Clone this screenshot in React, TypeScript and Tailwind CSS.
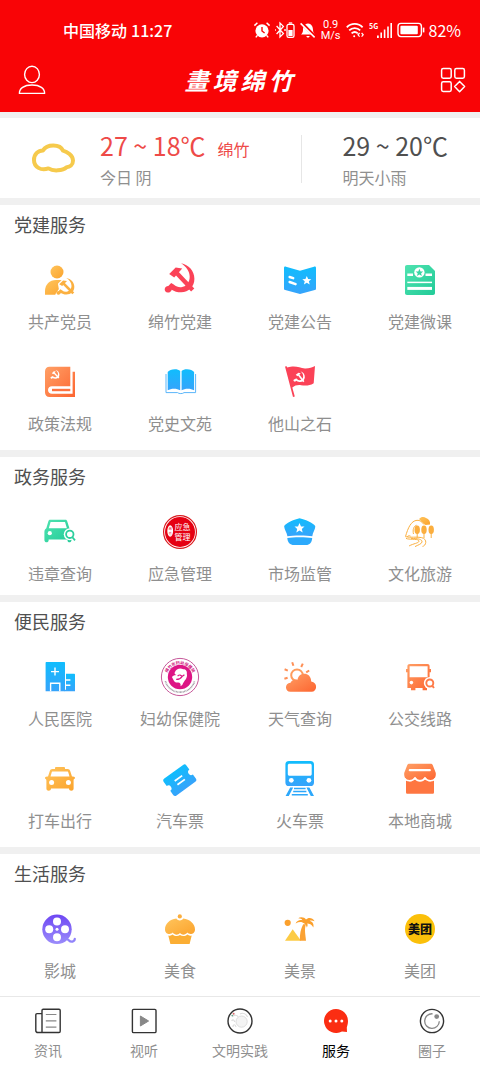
import React from 'react';
import { clsx } from 'clsx';

interface Service {
  title: string;
  icon: React.ReactNode;
}

interface ServiceGroup {
  title: string;
  items: Service[];
}

interface TabItem {
  title: string;
  icon: React.ReactNode;
  active?: boolean;
}

const STAR = 'M0-5 1.5-1.6 5-1.4 2.3.9 3.2 4.4 0 2.5-3.2 4.4-2.3.9-5-1.4-1.5-1.6Z';

const Gradients: React.FC = () => (
  <svg width="0" height="0" className="absolute" aria-hidden="true">
    <defs>
      <linearGradient id="amber" x1="0" y1="0" x2="1" y2="1">
        <stop offset="0" stopColor="#ffc45c" />
        <stop offset="1" stopColor="#fba32c" />
      </linearGradient>
      <linearGradient id="blue" x1="0" y1="0" x2="0" y2="1">
        <stop offset="0" stopColor="#10bdfd" />
        <stop offset="1" stopColor="#36a3fb" />
      </linearGradient>
      <linearGradient id="green" x1="0" y1="0" x2="1" y2="1">
        <stop offset="0" stopColor="#4fe3b0" />
        <stop offset="1" stopColor="#22cb98" />
      </linearGradient>
      <linearGradient id="orange" x1="0" y1="0" x2="1" y2="1">
        <stop offset="0" stopColor="#ffa066" />
        <stop offset="1" stopColor="#fd6530" />
      </linearGradient>
      <linearGradient id="violet" x1="0" y1="0" x2="0" y2="1">
        <stop offset="0" stopColor="#6e47f3" />
        <stop offset="1" stopColor="#9b8cfb" />
      </linearGradient>
    </defs>
  </svg>
);

const Icon: React.FC<{ children: React.ReactNode }> = ({ children }) => (
  <svg viewBox="0 0 40 40" className="h-10 w-10" fill="none" aria-hidden="true">
    {children}
  </svg>
);

// Hammer and sickle in a 30x30 box
const Emblem: React.FC<{ transform: string; color: string; outline?: boolean }> = ({
  transform,
  color,
  outline
}) => (
  <g transform={transform}>
    {outline && (
      <path
        d="M16.3 0C24 1.5 29.7 7.5 29.7 15.5 29.7 23.5 24 29 16.5 29H0L6 20 4.5 10.8 11 4.2 17.5 5.2 24 12Z"
        fill="#fff"
        stroke="#fff"
        strokeWidth="4"
        strokeLinejoin="round"
      />
    )}
    <path
      d="M16.3 0C24 1.5 29.7 7.5 29.7 15.5 29.7 23.5 24 29 16.5 29 12.5 29 9.5 28 7 26.4 6.5 28.2 4.8 29.5 3 29.3 1 29 0 27.6 0 26.2 0 24.3 1.5 22.8 3.6 22.8L6.5 19.6 9 21.3C11.5 23.4 14 24.3 16.5 24 21.5 23.4 25 19 25 13.5 25 8 21.5 3.5 16.3 0Z"
      fill={color}
    />
    <path d="M4.5 10.8 11 4.2 17.5 5.2 9.5 14.2Z" fill={color} />
    <path d="M11.5 9.3 28 26.8" stroke={color} strokeWidth="4.4" />
  </g>
);

const groups: ServiceGroup[] = [
  {
    title: '党建服务',
    items: [
      {
        title: '共产党员',
        icon: (
          <Icon>
            <circle cx="17" cy="12" r="6.5" fill="url(#amber)" />
            <path d="M5 34.7V31C5 24.6 9.6 20 16 20h4c3 0 5 1 7 3v11.7Z" fill="url(#amber)" />
            <Emblem transform="translate(16.5 18) scale(.6 .57)" color="#fbb040" outline />
          </Icon>
        )
      },
      {
        title: '绵竹党建',
        icon: (
          <Icon>
            <Emblem transform="translate(4.7 3.3)" color="#fb4257" />
          </Icon>
        )
      },
      {
        title: '党建公告',
        icon: (
          <Icon>
            <path
              d="M4 8C4 6.8 5 6.3 6 6.7L20 10.8 34 6.7C35 6.3 36 6.8 36 8V28.4C36 29.3 35.6 29.8 34.8 30.1L20 34 5.2 30.1C4.4 29.8 4 29.3 4 28.4Z"
              fill="url(#blue)"
            />
            <path d="M9.6 17 13.2 18.2M9.6 22 15.6 24.2" stroke="#fff" strokeWidth="2.4" strokeLinecap="round" />
            <path d={STAR} transform="translate(26.8 20.5) scale(.9)" fill="#fff" />
          </Icon>
        )
      },
      {
        title: '党建微课',
        icon: (
          <Icon>
            <path d="M7 5H29L35 11V33C35 34.2 34.2 35 33 35H7C5.8 35 5 34.2 5 33V7C5 5.8 5.8 5 7 5Z" fill="url(#green)" />
            <path d="M7.3 14.7H13M25.5 14.7H32" stroke="#fff" strokeWidth="2.6" />
            <path d="M7.3 22.4H32" stroke="#fff" strokeWidth="1.5" />
            <path d="M7.3 28.4H32" stroke="#fff" strokeWidth="3" />
            <circle cx="19.4" cy="12.4" r="5.2" fill="#fff" />
            <path d={STAR} transform="translate(19.4 12.6) scale(.75)" fill="#36d6a3" />
          </Icon>
        )
      },
      {
        title: '政策法规',
        icon: (
          <Icon>
            <path
              d="M9.5 4.7H30.3V24.3H12C9.6 24.3 8 25.8 8 28S9.6 31.8 12 31.8H32.6V9.7H35V35H9.5C6.8 35 5 33.2 5 30.5V9.2C5 6.5 6.8 4.7 9.5 4.7Z"
              fill="url(#orange)"
            />
            <path d="M12 28H30.3" stroke="#fd7340" strokeWidth="2.4" />
            <Emblem transform="translate(10.5 8) scale(.3)" color="#fff" />
          </Icon>
        )
      },
      {
        title: '党史文苑',
        icon: (
          <Icon>
            <path
              d="M7.7 10C9.5 7 17.5 6 20.2 9V28.3C17 26.2 11 26.2 7.7 28.3ZM21.6 9C24.3 6 32.3 7 34.1 10V28.3C30.8 26.2 24.8 26.2 21.6 28.3Z"
              fill="url(#blue)"
            />
            <path d="M6 12V30.6H17.6C18.6 31.9 23 31.9 24 30.6H35.6V12" stroke="#5bb6fa" />
          </Icon>
        )
      },
      {
        title: '他山之石',
        icon: (
          <Icon>
            <path
              d="M5 4.6 6.6 4.2 7.3 5.6C16 3 19 6.2 25 6.4 29 6.5 32 5.6 35 4L33.7 21.2C29 24.2 25 23.6 21 23.2 17.5 22.8 14.6 23.6 12.3 25.6L14.8 34.4 13 35Z"
              fill="#fb4257"
            />
            <Emblem transform="translate(14.5 8.7) rotate(6) scale(.37)" color="#fff" />
          </Icon>
        )
      }
    ]
  },
  {
    title: '政务服务',
    items: [
      {
        title: '违章查询',
        icon: (
          <Icon>
            <path
              fillRule="evenodd"
              d="M8.3 9.5C8.6 8.3 9.2 7.8 10.2 7.8H25.4C26.4 7.8 27 8.3 27.3 9.5L29.4 16.3C30.7 17 31.5 18.4 31.5 20V28C31.5 31 27.5 31 27.5 28.5V27.6H8.6V28.5C8.6 31 4.4 31 4.4 28V20C4.4 18.4 5 17 6.3 16.3ZM10.6 10 8.8 16.2H26.9L25 10Z"
              fill="url(#green)"
            />
            <circle cx="9.8" cy="21.2" r="2.1" fill="#fff" />
            <circle cx="29.8" cy="22.3" r="6" fill="#fff" />
            <circle cx="29.8" cy="22.3" r="3.7" stroke="#2ccf9d" strokeWidth="1.8" />
            <path d="M32.4 25.2 35 28.4" stroke="#2ccf9d" strokeWidth="1.8" />
          </Icon>
        )
      },
      {
        title: '应急管理',
        icon: (
          <Icon>
            <circle cx="20" cy="20" r="16.4" fill="#fff" stroke="#d91a1e" strokeWidth="1.2" />
            <circle cx="20" cy="20" r="15" fill="#e50012" />
            <ellipse cx="10.2" cy="19" rx="2.9" ry="5.8" fill="#fff" />
            <g textAnchor="middle">
              <text x="10.2" y="18" fontSize="3" fill="#e50012">绵</text>
              <text x="10.2" y="22.6" fontSize="3" fill="#e50012">竹</text>
              <text x="22.6" y="17.6" fontSize="8" fill="#fff">应急</text>
              <text x="22.6" y="28.4" fontSize="8" fill="#fff">管理</text>
            </g>
          </Icon>
        )
      },
      {
        title: '市场监管',
        icon: (
          <Icon>
            <path
              d="M4.2 14.8C3.6 13.2 10 8.5 19.6 6.3 29.2 8.5 35.8 13.2 35.3 14.8 35 18.2 32.8 20.3 32.3 24.3 26 23.3 13.5 23.3 7.4 24.3 6.8 20.3 4.5 18.2 4.2 14.8Z"
              fill="url(#blue)"
            />
            <path d="M7.3 25.9C13 25 26 25 32.2 25.9 32 30.4 29.5 33 26 33H14C10 33 7.6 30.4 7.3 25.9Z" fill="#2caafc" />
            <path d={STAR} transform="translate(19.5 16)" fill="#fff" />
          </Icon>
        )
      },
      {
        title: '文化旅游',
        icon: (
          <Icon>
            <path d="M19 7C21 4.5 24 4.4 26 6 29 7 30.5 9.5 30 12.5L25.5 13 22 10Z" fill="url(#amber)" />
            <g stroke="#fbb040">
              <path d="M5.5 24.5C8 16 11 8.8 17 8.3 20 8 22 10 24 12.5M7 25C8 23.5 9.5 23.5 10.6 24.2M13.5 22C12.5 18 13.6 14 16.6 13.2" />
              <path d="M5.5 24.7C11 26 16 24.4 21.5 25.6 28 27 26 34 22.5 34.4M6 26.4C9 27.8 17 26.6 18.6 28.4 20.5 31 14 31.2 9 34M11 26.6C18 26.2 22.5 27.4 22 30 21.6 32 18 33 15 34.6" />
              <path d="M17.2 15V26M24 15V26M31.2 15V26" />
            </g>
            <g fill="#fbae3e">
              <ellipse cx="17.2" cy="17.8" rx="2.7" ry="4.3" />
              <ellipse cx="24" cy="17.8" rx="2.7" ry="4.3" />
              <ellipse cx="31.2" cy="17.8" rx="2.7" ry="4.3" />
            </g>
          </Icon>
        )
      }
    ]
  },
  {
    title: '便民服务',
    items: [
      {
        title: '人民医院',
        icon: (
          <Icon>
            <path d="M6.6 5H24C24.6 5 25 5.4 25 6V34.3H5.6V6C5.6 5.4 6 5 6.6 5Z" fill="url(#blue)" />
            <path d="M26 16.8H34C34.6 16.8 35 17.2 35 17.8V34.3H24.5V32.8H26Z" fill="url(#blue)" />
            <path d="M15 10.6V18.6M11 14.6H19M10.6 34.3V26.3H19.8V34.3M25 23H30.4M25 28.3H30.4" stroke="#fff" strokeWidth="1.4" />
          </Icon>
        )
      },
      {
        title: '妇幼保健院',
        icon: (
          <Icon>
            <circle cx="20" cy="20" r="18.6" stroke="#c0468f" strokeWidth=".9" />
            <circle cx="20" cy="20" r="12.2" fill="#dd1585" />
            <path id="seal-arc" d="M6.6 20.6A13.4 13.4 0 0 1 33.4 20.6" />
            <text fontSize="4" fill="#d0107c" className="font-bold">
              <textPath href="#seal-arc" startOffset="50%" textAnchor="middle">绵竹市妇幼保健院</textPath>
            </text>
            <path d="M5.4 24.2A15.2 15.2 0 0 0 34.6 24.2" stroke="#98929a" strokeWidth="1.6" strokeDasharray=".8 .6" />
            <path
              d="M14.7 15.5C16 12 20 10.6 23.2 12.2 25.5 12 27.4 14 26.8 16.8 28 21.5 24 23.5 22.4 27.8L20.6 29.2C21 26.2 19.6 25 17 25.6 14 25.4 13.4 22.4 12 20.2 13 18 15 19 16.4 17.8 14.8 17.5 14.4 16.6 14.7 15.5Z"
              fill="#fff"
            />
            <path d="M17.6 19.2C19.3 17.2 21.5 18 22 19.6 20.6 22 18.4 22.4 16.2 22.4M22 19.6 24.4 17.8" stroke="#dd1585" strokeWidth="1.2" />
          </Icon>
        )
      },
      {
        title: '天气查询',
        icon: (
          <Icon>
            <circle cx="17" cy="18.2" r="5.8" stroke="#ff9c5c" strokeWidth="2" />
            <path
              d="M4.6 12.3 7.8 13.6M12.2 5.3 13.4 8.8M22.8 6.6 21.2 10M29.2 13.5 26.2 15.3M4.4 21.8 7.6 20.8"
              stroke="#fe8f55"
              strokeWidth="2"
            />
            <path
              d="M10.5 34.7C4.6 34.7 4.4 26 10.5 25.7 12 22.6 15.6 21.8 17.6 22.8 18.6 14.6 31 14.6 31.2 24.4 38 25.2 37.4 34.7 31.5 34.7Z"
              fill="url(#orange)"
            />
          </Icon>
        )
      },
      {
        title: '公交线路',
        icon: (
          <Icon>
            <path
              fillRule="evenodd"
              d="M10 7H27.4C28.8 7 29.6 7.8 29.6 9.2V12H31V15.2H29.6V31H27V33.2H22.6V31H15.4V33.2H11V31H7.4V15.2H6V12H7.4V9.2C7.4 7.8 8.4 7 10 7ZM9.6 9.2V20.2H27.6V9.2Z"
              fill="url(#orange)"
            />
            <circle cx="11.4" cy="25.6" r="1.8" fill="#fff" />
            <circle cx="29.8" cy="26" r="6" fill="#fff" />
            <circle cx="29.8" cy="26" r="3.5" stroke="#fe7b49" strokeWidth="1.9" />
            <path d="M32.2 28.6 34 31" stroke="#fe7b49" strokeWidth="1.9" />
          </Icon>
        )
      },
      {
        title: '打车出行',
        icon: (
          <Icon>
            <path
              fillRule="evenodd"
              d="M15 10V8.8C15 8.3 15.4 8 16 8H24C24.6 8 25 8.3 25 8.8V10H27.6C29 10 29.8 10.8 30.2 12L32 17.6C33 17.8 35 17.4 35 19 34.8 20.2 33.4 20 33.6 21.4V29.5C33.6 32.5 29 32.5 29 29.5H11C11 32.5 6.4 32.5 6.4 29.5V21.4C6.4 20 5 20.2 5 19 5 17.4 7 17.8 8 17.6L9.8 12C10.2 10.8 11 10 12.4 10ZM13 12.6C12 12.6 11.8 13 11.6 13.8L10.5 17.6H29.5L28.4 13.8C28.2 13 28 12.6 27 12.6Z"
              fill="url(#amber)"
            />
            <circle cx="11.6" cy="23.6" r="2.5" fill="#fff" />
            <circle cx="28.4" cy="23.6" r="2.5" fill="#fff" />
          </Icon>
        )
      },
      {
        title: '汽车票',
        icon: (
          <Icon>
            <g transform="translate(19.8 21.2) rotate(-36)">
              <path
                d="M-11.6-10.4H11.6C13.2-10.4 14-9.6 14-8V-3A3 3 0 0 0 14 3V8C14 9.6 13.2 10.4 11.6 10.4H-11.6C-13.2 10.4-14 9.6-14 8V3A3 3 0 0 0-14-3V-8C-14-9.6-13.2-10.4-11.6-10.4Z"
                fill="url(#blue)"
              />
              <path d="M-4.6-2.3H4.6M-4.6 2.3H4.6" stroke="#fff" strokeWidth="1.8" />
            </g>
          </Icon>
        )
      },
      {
        title: '火车票',
        icon: (
          <Icon>
            <path
              fillRule="evenodd"
              d="M9 2H30.4C32.8 2 34 3.2 34 5.6V23.4C34 25.8 32.8 27 30.4 27H9C6.6 27 5.4 25.8 5.4 23.4V5.6C5.4 3.2 6.6 2 9 2ZM9.8 4.8C8.4 4.8 7.8 5.4 7.8 6.8V14.8C7.8 16.2 8.4 16.8 9.8 16.8H29.7C31.1 16.8 31.7 16.2 31.7 14.8V6.8C31.7 5.4 31.1 4.8 29.7 4.8Z"
              fill="url(#blue)"
            />
            <circle cx="11.3" cy="21.3" r="2.4" fill="#fff" />
            <circle cx="28.9" cy="21.3" r="2.4" fill="#fff" />
            <path d="M10.2 28.6H13.2L8.8 37H5.6ZM29.4 28.6H26.4L30.8 37H34Z" fill="#2da8fb" />
            <path d="M14 29.5H25.6M13.2 32.6H26.4M11.8 35.8H27.8" stroke="#2da8fb" strokeWidth="1.5" />
          </Icon>
        )
      },
      {
        title: '本地商城',
        icon: (
          <Icon>
            <path d="M6 20.6V33.2C6 34.2 6.6 34.7 7.5 34.7H32.5C33.4 34.7 34 34.2 34 33.2V20.6Z" fill="#fe7641" />
            <path
              d="M9.4 4.7H30.6C31.6 4.7 32.3 5.1 32.7 6L35.8 14C36.2 19 33.6 21.4 30.4 21.4 28 21.4 26 20.2 25 18 23 21.8 17 21.8 15 18 14 20.2 12 21.4 9.6 21.4 6.4 21.4 3.8 19 4.2 14L7.3 6C7.7 5.1 8.4 4.7 9.4 4.7Z"
              fill="url(#orange)"
            />
            <path
              d="M4.6 19.4C6.4 22.4 12 23 15 19 17.6 22.8 22.4 22.8 25 19 28 23 33.6 22.4 35.4 19.4"
              stroke="#fff"
              strokeWidth="1.6"
            />
            <path d="M9.8 11.2H29.8" stroke="#fff" strokeWidth="2.2" strokeLinecap="round" />
          </Icon>
        )
      }
    ]
  },
  {
    title: '生活服务',
    items: [
      {
        title: '影城',
        icon: (
          <Icon>
            <circle cx="17" cy="20.3" r="14.7" fill="url(#violet)" />
            <path d="M24 31C28.5 27.5 28 33.5 32.5 32.6 34 32.2 34.8 31.2 34.8 29.8" stroke="#9183fa" strokeWidth="2.2" strokeLinecap="round" />
            <g fill="#fff">
              <circle cx="17" cy="12.4" r="4" />
              <circle cx="9.2" cy="20.3" r="4" />
              <circle cx="25" cy="20.3" r="4" />
              <circle cx="17" cy="28.2" r="4" />
              <circle cx="17" cy="20.3" r="1.5" />
            </g>
          </Icon>
        )
      },
      {
        title: '美食',
        icon: (
          <Icon>
            <circle cx="19.8" cy="7.4" r="2.1" fill="#fbae3e" />
            <path
              d="M16.4 9.6C17 12 22.6 12 23.2 9.6 30 10.4 35 15 35 20.4 35 25.4 29.4 26.2 27.4 23.6 25 26.4 22 26.2 20 24 18 26.2 15 26.4 12.6 23.6 10.6 26.2 5 25.4 5 20.4 5 15 9.6 10.4 16.4 9.6Z"
              fill="url(#amber)"
            />
            <path d="M8.3 26.4C10 27 11.4 26.6 12.6 25.6 15 27.6 18 27.4 20 26 22 27.4 25 27.6 27.4 25.6 28.6 26.6 30 27 31.7 26.4L29.6 35H10.4Z" fill="#fbae34" />
          </Icon>
        )
      },
      {
        title: '美景',
        icon: (
          <Icon>
            <circle cx="7.7" cy="13.8" r="3.1" fill="#fba02c" />
            <path d="M12.7 20.2 21 31.7H5Z" fill="#fccb45" />
            <path d="M23.2 15.2H26C24 20 25.6 26 26 31.7H19.8C19.8 25 20.6 20 23.2 15.2Z" fill="#fba233" />
            <path
              d="M24.4 14.6C22 12.4 19 12.6 15.6 14.4 16.6 11.6 20 10.4 22.4 11.2 21.6 10 20 9.2 17.8 9.4 20.6 7.4 24.6 8.2 26 10.6 28 8.2 32.6 8.4 34.6 12.2 32.8 11.4 31 11.2 29.6 11.8 32.8 12.6 34 15.2 33.4 18.4 31.6 15.6 29.4 14.6 27.2 14.6 28 16 27.6 17.4 26.8 18.4 26.4 16.8 25.6 15.4 24.4 14.6Z"
              fill="#fba02c"
            />
          </Icon>
        )
      },
      {
        title: '美团',
        icon: (
          <Icon>
            <circle cx="20" cy="20" r="15" fill="#fbc00a" />
            <text x="20" y="24.5" fontSize="12" textAnchor="middle" fill="#111" className="font-black">美团</text>
          </Icon>
        )
      }
    ]
  }
];

const TabIcon: React.FC<{ children: React.ReactNode }> = ({ children }) => (
  <svg viewBox="0 0 28 28" className="h-7 w-7" fill="none" aria-hidden="true">
    {children}
  </svg>
);

const tabs: TabItem[] = [
  {
    title: '资讯',
    icon: (
      <TabIcon>
        <path
          d="M8 25.5V3.5C8 2.6 8.4 2.2 9.2 2.2H25C25.8 2.2 26.2 2.6 26.2 3.5V24.2C26.2 25 25.8 25.5 25 25.5H4C2.6 25.5 1.8 24.8 1.8 23.4V7.8C1.8 7 2.2 6.6 3 6.6H8"
          stroke="#333"
          strokeWidth="1.4"
        />
        <path d="M11.8 7.5H22.4M11.8 13.9H22.4M11.8 20.2H22.4" stroke="#888" strokeWidth="1.2" />
      </TabIcon>
    )
  },
  {
    title: '视听',
    icon: (
      <TabIcon>
        <rect x="2.4" y="2.4" width="23.6" height="23.2" rx="1.2" stroke="#333" strokeWidth="1.4" />
        <path d="M10.4 9 18.6 14 10.4 19Z" fill="#888" stroke="#888" strokeLinejoin="round" />
      </TabIcon>
    )
  },
  {
    title: '文明实践',
    icon: (
      <TabIcon>
        <circle cx="14" cy="14" r="12" fill="#fff" stroke="#333" strokeWidth="1.4" />
        <circle cx="15.6" cy="14.6" r="5.6" fill="#f4f4f4" stroke="#ddd" />
        <path d="M6 10C8 7.4 11 8 12 9.6M5.6 14C7 12 8.4 13 8.6 15M7 20C7 17 9.4 17 10 20M14 7C17 5.4 20 7 21.6 10" stroke="#ddd" strokeWidth="1.2" />
        <circle cx="7.6" cy="6.8" r="1" fill="#d96a6a" />
        <circle cx="6.2" cy="8.6" r=".8" fill="#5aa88a" />
      </TabIcon>
    )
  },
  {
    title: '服务',
    active: true,
    icon: (
      <TabIcon>
        <path d="M14 2A12 12 0 0 1 26 14C26 17 25.2 19 24.8 20.4L25 25 20 24.4A12 12 0 1 1 14 2Z" fill="#fb2d12" />
        <g fill="#fff">
          <circle cx="8.2" cy="14" r="1.5" />
          <circle cx="14" cy="14" r="1.5" />
          <circle cx="19.8" cy="14" r="1.5" />
        </g>
      </TabIcon>
    )
  },
  {
    title: '圈子',
    icon: (
      <TabIcon>
        <circle cx="14" cy="14" r="11.6" stroke="#333" strokeWidth="1.4" />
        <path d="M14.6 6.8A7.3 7.3 0 1 0 21.3 14.2" stroke="#888" strokeWidth="1.3" />
        <circle cx="18.7" cy="9.6" r="2.4" fill="#888" />
      </TabIcon>
    )
  }
];

const StatusBar: React.FC = () => (
  <div className="flex h-5 items-center justify-between pr-[19px] pl-[63px]">
    <div className="flex items-center gap-1 text-base font-medium">
      <span>中国移动</span>
      <span>11:27</span>
    </div>
    <div className="flex items-center gap-1" aria-hidden="true">
      <svg viewBox="0 0 18 18" className="h-[18px] w-[18px]" fill="none">
        <circle cx="9" cy="9.8" r="6.6" fill="#fff" />
        <path d="M1.4 4.6 4.4 1.8M16.6 4.6 13.6 1.8M4.4 14.4 2.8 16.4M13.6 14.4 15.2 16.4" stroke="#fff" strokeWidth="1.5" />
        <path d="M9 6V10L11.6 12" stroke="#f90406" strokeWidth="1.4" />
      </svg>
      <svg viewBox="0 0 20 18" className="h-[18px] w-5" fill="none" stroke="#fff" strokeWidth="1.3">
        <path d="M1.6 5 8.4 12.6 5 16V2L8.4 5.4 1.6 13M10 8V10M0 8V10" />
        <rect x="12" y="3.4" width="7" height="13" rx="1.6" />
        <path d="M13.8 2H17.2" />
        <path d="M14 9.6H17V14.4H14Z" fill="#fff" />
      </svg>
      <svg viewBox="0 0 18 18" className="h-[18px] w-[18px]" fill="none">
        <path d="M9 2.4C13 3 14 6 14 9 14 11.4 15 12.4 16 13.6H2C3 12.4 4 11.4 4 9 4 6 5 3 9 2.4ZM7.4 15H10.6C10.4 17 7.6 17 7.4 15Z" fill="#fff" />
        <path d="M2 1.4 17 16.4" stroke="#f90406" strokeWidth="3" />
        <path d="M1.6 2.4 15.6 16.4" stroke="#fff" strokeWidth="1.5" />
      </svg>
      <div className="flex flex-col items-center font-['Roboto',sans-serif] text-[11px] leading-[11px]">
        <span>0.9</span>
        <span>M/s</span>
      </div>
      <svg viewBox="0 0 20 18" className="h-[18px] w-5" fill="none" stroke="#fff" strokeWidth="1.8">
        <path d="M1.8 6.4C6 1.8 13.4 1.8 17.6 6.4M4.2 9.4C7.2 6.4 12.2 6.4 15.2 9.4M6.6 12.4C8.4 10.8 11 10.8 12.8 12.4" />
        <circle cx="9.2" cy="15.2" r="1" fill="#fff" stroke="none" />
        <path d="M14.6 12 13 13.8 14.6 15.6M16.6 12 18.2 13.8 16.6 15.6" strokeWidth="1.2" />
      </svg>
      <svg viewBox="0 0 24 18" className="h-[18px] w-6" fill="#fff">
        <text x="0" y="8" fontSize="7" className="font-bold">5G</text>
        <path d="M8 14.4h1.8V17H8ZM11.4 11.6h1.6V17h-1.6ZM14.8 8.6h1.6V17h-1.6ZM18.2 5.4h1.6V17h-1.6ZM21.4 2H23V17h-1.6Z" />
      </svg>
      <svg viewBox="0 0 28 16" className="h-4 w-7" fill="none">
        <rect x="1" y="1.4" width="23.4" height="13.2" rx="3" stroke="#fff" strokeWidth="1.4" />
        <rect x="3.4" y="3.8" width="17.4" height="8.4" rx="1" fill="#fff" />
        <path d="M26.6 5.6V10.4" stroke="#fff" strokeWidth="1.6" />
      </svg>
      <span className="text-base">82%</span>
    </div>
  </div>
);

const Header: React.FC = () => (
  <header className="bg-[#f90406] pt-5 pb-3 text-white">
    <StatusBar />
    <div className="mt-5 flex h-10 items-center justify-between pr-[9px] pl-[14px]">
      <button type="button" aria-label="个人中心" className="flex h-9 w-9 items-center justify-center">
        <svg viewBox="0 0 28 30" className="h-[30px] w-7" fill="none" stroke="#fff" strokeWidth="1.4">
          <ellipse cx="14" cy="9.4" rx="7.4" ry="8.2" />
          <path d="M1.4 28.4C1.2 23.4 6 20 14 20S26.8 23.4 26.6 28.4Z" strokeLinejoin="round" />
        </svg>
      </button>
      <h1 className="flex gap-1 pr-2 text-2xl font-bold italic">
        <span>畫</span>
        <span>境</span>
        <span>绵</span>
        <span>竹</span>
      </h1>
      <button type="button" aria-label="更多" className="flex h-9 w-9 items-center justify-center">
        <svg viewBox="0 0 26 26" className="h-[26px] w-[26px]" fill="none" stroke="#fff" strokeWidth="1.5">
          <rect x="1.6" y="1.6" width="9.6" height="9.6" rx="1.6" />
          <rect x="14.8" y="1.6" width="9.6" height="9.6" rx="1.6" />
          <rect x="1.6" y="14.8" width="9.6" height="9.6" rx="1.6" />
          <path d="M19.6 14.4 24.6 19.6 19.6 24.8 14.6 19.6Z" strokeLinejoin="round" />
        </svg>
      </button>
    </div>
  </header>
);

const Weather: React.FC = () => (
  <section className="flex h-20 items-center bg-white pt-[2px] pr-8 pl-[31px]">
    <svg viewBox="0 0 46 32" className="h-8 w-[46px]" fill="none" aria-hidden="true">
      <path
        d="M12 7.4C16 .8 29 .6 32 7.6 36 8.6 42 12.4 42 17.6 42 22 38.6 24.2 35.6 24.2 31.6 28 22 28.4 17.4 25.4 10 28.2 3 24 3 17 3 11 7.4 7.4 12 7.4Z"
        stroke="#f6ca4c"
        strokeWidth="4"
        strokeLinejoin="round"
      />
    </svg>
    <div className="ml-[23px] flex-1">
      <p className="flex items-baseline gap-3 text-[#ee4a48]">
        <span className="text-[25px] leading-9">27 ~ 18℃</span>
        <span className="text-base">绵竹</span>
      </p>
      <p className="text-base leading-7 text-[#8f8f8f]">今日 阴</p>
    </div>
    <div className="h-12 w-px bg-[#e6e6e6]" />
    <div className="ml-10">
      <p className="text-[25px] leading-9 text-[#505050]">29 ~ 20℃</p>
      <p className="text-base leading-7 text-[#8f8f8f]">明天小雨</p>
    </div>
  </section>
);

const ServiceSection: React.FC<{ group: ServiceGroup; className?: string }> = ({ group, className }) => (
  <section className={clsx('bg-white', group.items.length > 4 ? 'pb-[15px]' : 'pb-[10px]', className)}>
    <h2 className="px-[14px] text-[18px] leading-[38px] text-[#505050]">{group.title}</h2>
    <div className="grid grid-cols-4 gap-y-[29px] pt-[17px]">
      {group.items.map((item) => (
        <a key={item.title} href="#" className="flex flex-col items-center gap-[9px]">
          {item.icon}
          <span className="text-base leading-6 text-[#8f8f8f]">{item.title}</span>
        </a>
      ))}
    </div>
  </section>
);

const TabBar: React.FC = () => (
  <nav className="sticky bottom-0 grid grid-cols-5 border-t border-[#e8e8e8] bg-white pt-[10px] pb-[6px]">
    {tabs.map((tab) => (
      <a key={tab.title} href="#" className="flex flex-col items-center gap-[5px]">
        {tab.icon}
        <span className={clsx('text-[14px] leading-5', tab.active ? 'text-black' : 'text-[#8f8f8f]')}>
          {tab.title}
        </span>
      </a>
    ))}
  </nav>
);

const App: React.FC = () => (
  <div className="flex min-h-screen flex-col bg-[#f0f0f0] font-['Noto_Sans_CJK_SC',sans-serif]">
    <Gradients />
    <Header />
    <main className="flex flex-1 flex-col gap-[7px] pt-[6px]">
      <Weather />
      {groups.map((group, index) => (
        <ServiceSection
          key={group.title}
          group={group}
          className={index === groups.length - 1 ? 'flex-1' : undefined}
        />
      ))}
    </main>
    <TabBar />
  </div>
);

export default App;
